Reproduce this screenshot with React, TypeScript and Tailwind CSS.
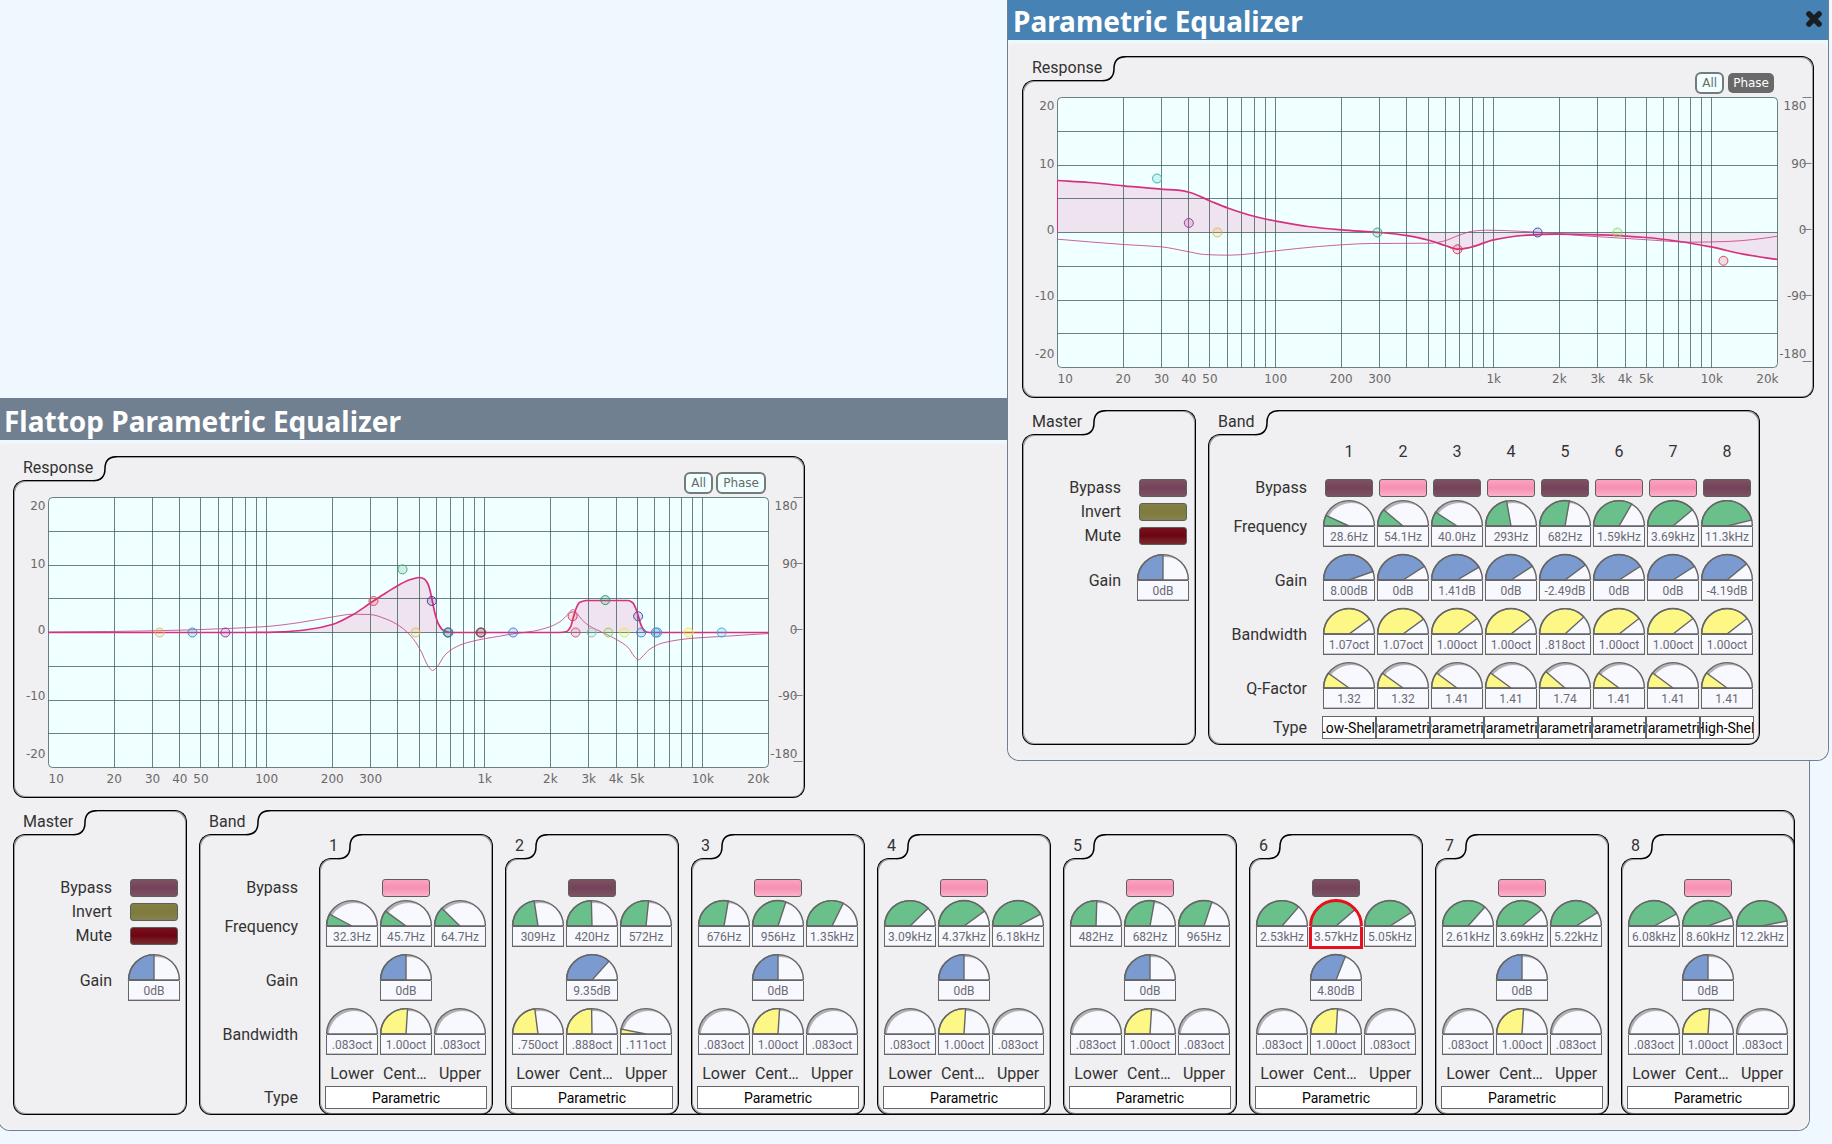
import { useState } from "react"
import type { ReactNode } from "react"

type Point = [number, number]
type Handle = { freq: number, db: number, color: string }

const PLOT_W = 720
const PLOT_H = 270
const AXIS_H = 264
const LABEL_Y = [12, 70, 136, 202, 260]
const X_TICKS: [number, string][] = [
    [20, "20"], [30, "30"], [40, "40"], [50, "50"], [100, "100"], [200, "200"], [300, "300"],
    [1000, "1k"], [2000, "2k"], [3000, "3k"], [4000, "4k"], [5000, "5k"], [10000, "10k"],
]
const GRID_FREQS = [10, 100, 1000, 10000]
    .flatMap((d) => [1, 2, 3, 4, 5, 6, 7, 8, 9].map((n) => n * d))
    .filter((f) => f > 10 && f < 20000)

const GREEN = "#69c08a"
const BLUE = "#7b9bd0"
const YELLOW = "#fdf786"

const freqPos = (hz: number) => Math.log10(hz / 10) / Math.log10(2000)
const octPos = (oct: number) => Math.log10(oct / 0.083) / 2.08
const xOf = (hz: number) => freqPos(hz) * PLOT_W
const yOf = (db: number) => PLOT_H / 2 - db * 6.75

function formatHz(hz: number) {
    if (hz >= 1000) return `${(hz / 1000).toPrecision(3)}kHz`
    return `${hz.toPrecision(3)}Hz`
}

function formatDb(db: number) {
    return db === 0 ? "0dB" : `${db.toFixed(2)}dB`
}

function formatOct(oct: number) {
    return oct < 1 ? `${oct.toFixed(3).slice(1)}oct` : `${oct.toFixed(2)}oct`
}

// Monotone cubic through the sampled points, so flat parts stay flat
function smooth(pts: Point[]) {
    const slope = pts.slice(1).map((p, i) => (p[1] - pts[i][1]) / (p[0] - pts[i][0]))
    const tan = pts.map((_, i) => {
        if (i === 0) return slope[0]
        if (i === pts.length - 1) return slope[i - 1]
        const a = slope[i - 1]
        const b = slope[i]
        return a * b <= 0 ? 0 : (2 * a * b) / (a + b)
    })
    let d = `M${pts[0][0]} ${pts[0][1]}`
    for (let i = 1; i < pts.length; i++) {
        const [x0, y0] = pts[i - 1]
        const [x1, y1] = pts[i]
        const h = (x1 - x0) / 3
        d += ` C${x0 + h} ${y0 + tan[i - 1] * h} ${x1 - h} ${y1 - tan[i] * h} ${x1} ${y1}`
    }
    return d
}

function Chart({ gain, phase, handles, title }: { gain: Point[], phase: Point[], handles: Handle[], title: string }) {
    const line = smooth(gain)
    return (
        <svg width="790" height="300" viewBox="-34.5 -0.5 790 300" className="block" role="img" aria-label={title}>
            <rect width={PLOT_W} height={PLOT_H} rx="4" fill="#f0ffff" />
            <path d={`${line} L${PLOT_W} 135 L0 135 Z`} fill="#dd2878" fillOpacity="0.13" />
            <g stroke="#2f4f4f" strokeOpacity="0.7">
                {GRID_FREQS.map((f) => (
                    <path key={f} d={`M${Math.round(xOf(f))} 0V${PLOT_H}`} />
                ))}
                {[1, 2, 3, 4, 5, 6, 7].map((i) => (
                    <path key={i} d={`M0 ${Math.round((i * PLOT_H) / 8)}H${PLOT_W}`} />
                ))}
                <rect width={PLOT_W} height={PLOT_H} rx="4" fill="none" />
            </g>
            <path d={`M0 135V${gain[0][1]}`} stroke="#d6317f" />
            <path d={line} fill="none" stroke="#d6317f" strokeWidth="1.7" />
            <path d={smooth(phase)} fill="none" stroke="#c43c84" strokeWidth="0.9" strokeOpacity="0.9" />
            {handles.map((h, i) => (
                <circle key={i} cx={xOf(h.freq)} cy={yOf(h.db)} r="4.5" stroke={h.color} fill={h.color} fillOpacity="0.18" />
            ))}
            <g fontFamily="'DejaVu Sans', sans-serif" fontSize="12" fill="#696969">
                {["20", "10", "0", "-10", "-20"].map((t, i) => (
                    <text key={t} x="-3" y={LABEL_Y[i]} textAnchor="end">{t}</text>
                ))}
                {["180", "90", "0", "-90", "-180"].map((t, i) => (
                    <text key={t} x="749" y={LABEL_Y[i]} textAnchor="end">{t}</text>
                ))}
                <text x="0" y="285">10</text>
                {X_TICKS.map(([f, t]) => (
                    <text key={f} x={xOf(f)} y="285" textAnchor="middle">{t}</text>
                ))}
                <text x="721" y="285" textAnchor="end">20k</text>
            </g>
            {[0, 1, 2, 3, 4].map((i) => (
                <path key={i} d={`M745 ${(i * AXIS_H) / 4}H754`} stroke="#808080" />
            ))}
        </svg>
    )
}

function Panel({ label, className = "", children }: { label: string, className?: string, children: ReactNode }) {
    return (
        <section className={`flex flex-col ${className}`}>
            <div className="flex h-9">
                <div className="flex flex-col">
                    <h3 className="h-6 pl-2.5 text-base leading-6 text-[#333]">{label}</h3>
                    <div className="h-3 rounded-tl-xl border-t border-l border-black shadow-[inset_1px_1px_0_#00000059]" />
                </div>
                <svg width="24" height="26" viewBox="0 0 24 26" fill="none" className="shrink-0">
                    <path d="M0 24.7C8 24.7 12 20 12 12.5C12 5 16 0.7 24 0.7" stroke="black" strokeWidth="1.5" />
                </svg>
                <div className="flex-1 rounded-tr-xl border-t border-r border-black shadow-[inset_-1px_1px_0_#00000059]" />
            </div>
            <div className="grow rounded-b-xl border-x border-b border-black shadow-[inset_1px_-1px_0_#00000059,inset_-1px_0_0_#00000059]">
                {children}
            </div>
        </section>
    )
}

function PlotToggle({ label, initial = false }: { label: string, initial?: boolean }) {
    const [on, setOn] = useState(initial)
    const look = on
        ? "border border-transparent bg-[#696969] bg-clip-padding px-[5px] text-white"
        : "border-2 border-[#737b7b] bg-[#f0ffff] px-[5px] text-[#696969]"
    return (
        <button
            type="button" aria-pressed={on} onClick={() => setOn(!on)}
            className={`flex h-[22px] items-center rounded-md font-['DejaVu_Sans',sans-serif] text-xs ${look}`}
        >
            {label}
        </button>
    )
}

function Response({ phaseOn = false, children }: { phaseOn?: boolean, children: ReactNode }) {
    return (
        <Panel label="Response" className="h-[341px] w-[792px]">
            <div className="-mt-5 flex justify-end gap-[3px] pr-[38px] pb-[3px]">
                <PlotToggle label="All" />
                <PlotToggle label="Phase" initial={phaseOn} />
            </div>
            {children}
        </Panel>
    )
}

const LED_COLORS = {
    pinkOff: "from-[#7d5262] via-[#74425a] to-[#7b5563]",
    pinkOn: "from-[#f9a4c0] via-[#f78fb3] to-[#f9b2c9]",
    olive: "from-[#828047] via-[#807b3c] to-[#83824f]",
    red: "from-[#76121c] via-[#6d0411] to-[#762a30]",
}

function Led({ color, label }: { color: keyof typeof LED_COLORS, label: string }) {
    return (
        <div className="flex h-6 w-[54px] items-center justify-center">
            <button
                type="button" aria-label={label}
                className={`h-[18px] w-12 rounded-[3px] border border-[#5e5e5e] bg-linear-to-b ${LED_COLORS[color]}`}
            />
        </div>
    )
}

function Knob({ pos, text, color, label, selected = false }: { pos: number, text: string, color: string, label: string, selected?: boolean }) {
    const a = Math.PI * Math.min(1, Math.max(0, pos))
    const px = 26 - 25.4 * Math.cos(a)
    const py = 26 - 25.4 * Math.sin(a)
    return (
        <div className="flex h-[54px] w-[54px] flex-col items-center">
            <svg width="52" height="27" viewBox="0 0 52 27" className="shrink-0 overflow-visible" aria-hidden="true">
                <clipPath id="dome"><path d="M0.6 26A25.4 25.4 0 0 1 51.4 26Z" /></clipPath>
                <g clipPath="url(#dome)">
                    <rect width="52" height="27" fill="#b2b2b6" />
                    <circle cx="28.5" cy="29" r="26" fill="#f8f8ff" />
                </g>
                {pos > 0 && (
                    <path d={`M26 26L0.6 26A25.4 25.4 0 0 1 ${px} ${py}Z`} fill={color} stroke="#666" strokeWidth="1.4" />
                )}
                <path d="M0.6 26A25.4 25.4 0 0 1 51.4 26" fill="none" stroke={selected ? "#e8101a" : "#666"} strokeWidth={selected ? 3 : 1.4} />
                <path d="M0.6 26.2H51.4" stroke="#666" strokeWidth="1.8" />
            </svg>
            <input
                readOnly value={text} aria-label={label}
                className={`shrink-0 bg-[#f8f8ff] text-center text-xs text-[#6a6a72] outline-none ${selected ? "h-[22px] w-[54px] border-3 border-t-0 border-[#e8101a]" : "h-5 w-[52px] border border-t-0 border-[#666] shadow-[inset_0_-1px_0_#66666659]"}`}
            />
        </div>
    )
}

function TypeSelect({ value, label, narrow = false }: { value: string, label: string, narrow?: boolean }) {
    return (
        <div className={`flex h-6 items-start justify-center ${narrow ? "w-[54px]" : "w-full"}`}>
            <div className="flex h-[23px] w-full justify-center overflow-hidden border border-[#666] bg-white">
                <select
                    defaultValue={value} aria-label={label}
                    className={`shrink-0 appearance-none text-center text-sm text-black ${narrow ? "w-20" : "w-full"}`}
                >
                    {["Parametric", "Low-Shelf", "High-Shelf"].map((t) => <option key={t}>{t}</option>)}
                </select>
            </div>
        </div>
    )
}

function RowLabel({ className = "h-6", children }: { className?: string, children: ReactNode }) {
    return <div className={`flex items-center justify-end ${className}`}>{children}</div>
}

function Master() {
    return (
        <Panel label="Master" className="w-[174px]">
            <div className="flex justify-end gap-[15px] pt-[30px] pr-[5px] text-base text-[#333]">
                <div>
                    <RowLabel>Bypass</RowLabel>
                    <RowLabel>Invert</RowLabel>
                    <RowLabel>Mute</RowLabel>
                    <RowLabel className="mt-1.5 h-[54px]">Gain</RowLabel>
                </div>
                <div>
                    <Led color="pinkOff" label="Master bypass" />
                    <Led color="olive" label="Master invert" />
                    <Led color="red" label="Master mute" />
                    <div className="mt-1.5">
                        <Knob pos={0.5} text="0dB" color={BLUE} label="Master gain" />
                    </div>
                </div>
            </div>
        </Panel>
    )
}

function EqWindow({ title, bar, place, closable = false, children }: { title: string, bar: string, place: string, closable?: boolean, children: ReactNode }) {
    return (
        <article className={`absolute overflow-hidden rounded-b-xl border-x border-b border-[#708090] bg-[#f0f8ff] ${place}`}>
            <header className={`flex h-[42px] items-center justify-between pt-1 pr-[5px] pl-[5px] ${bar}`}>
                <h2 className="font-['Noto_Sans',sans-serif] text-[28px] leading-[38px] font-bold text-white">{title}</h2>
                {closable && (
                    <button type="button" aria-label="Close" className="pb-1">
                        <svg width="18" height="18" viewBox="0 0 18 18">
                            <path d="M4 4L14 14M14 4L4 14" stroke="#1a1d21" strokeWidth="5.6" strokeLinecap="round" />
                        </svg>
                    </button>
                )}
            </header>
            <div className="mt-[3px] flex flex-col gap-[13px] rounded-b-xl bg-[#f0eff1] px-[14px] pt-[13px] pb-[15px] shadow-[inset_0_0_4px_#f0f8ff]">
                {children}
            </div>
        </article>
    )
}

const flatBands = [
    { bypass: true, freq: [32.3, 45.7, 64.7], gain: 0, bw: [0.083, 1, 0.083] },
    { bypass: false, freq: [309, 420, 572], gain: 9.35, bw: [0.75, 0.888, 0.111] },
    { bypass: true, freq: [676, 956, 1350], gain: 0, bw: [0.083, 1, 0.083] },
    { bypass: true, freq: [3090, 4370, 6180], gain: 0, bw: [0.083, 1, 0.083] },
    { bypass: true, freq: [482, 682, 965], gain: 0, bw: [0.083, 1, 0.083] },
    { bypass: false, freq: [2530, 3570, 5050], gain: 4.8, bw: [0.083, 1, 0.083], selected: 1 },
    { bypass: true, freq: [2610, 3690, 5220], gain: 0, bw: [0.083, 1, 0.083] },
    { bypass: true, freq: [6080, 8600, 12200], gain: 0, bw: [0.083, 1, 0.083] },
]

const bands = [
    { bypass: false, freq: 28.6, gain: 8, bw: 1.07, bwPos: 0.8, q: 1.32, qPos: 0.197, type: "Low-Shelf" },
    { bypass: true, freq: 54.1, gain: 0, bw: 1.07, bwPos: 0.8, q: 1.32, qPos: 0.197, type: "Parametric" },
    { bypass: false, freq: 40, gain: 1.41, bw: 1, bwPos: 0.79, q: 1.41, qPos: 0.203, type: "Parametric" },
    { bypass: true, freq: 293, gain: 0, bw: 1, bwPos: 0.79, q: 1.41, qPos: 0.203, type: "Parametric" },
    { bypass: false, freq: 682, gain: -2.49, bw: 0.818, bwPos: 0.765, q: 1.74, qPos: 0.225, type: "Parametric" },
    { bypass: true, freq: 1590, gain: 0, bw: 1, bwPos: 0.79, q: 1.41, qPos: 0.203, type: "Parametric" },
    { bypass: true, freq: 3690, gain: 0, bw: 1, bwPos: 0.79, q: 1.41, qPos: 0.203, type: "Parametric" },
    { bypass: false, freq: 11300, gain: -4.19, bw: 1, bwPos: 0.79, q: 1.41, qPos: 0.203, type: "High-Shelf" },
]

const flatGain: Point[] = [
    [0, 135], [200, 135], [234.7, 134.3], [259.7, 132], [284.7, 126.7], [304.7, 117], [321.3, 106], [338, 95],
    [351.3, 87], [361.3, 82.3], [370.7, 80], [375.3, 81.3], [379.7, 87], [383.7, 102.7], [386.3, 115.3],
    [389.7, 126], [394.7, 132.7], [403, 135], [511.3, 135], [518, 134], [522, 129.3], [525.3, 118.3],
    [528, 110], [531.3, 104.7], [538, 103], [579.6, 103], [584, 105], [587.3, 111], [590, 119.3],
    [592.6, 127.7], [596.3, 133.7], [601.3, 135], [720, 135],
]

const flatPhase: Point[] = [
    [0, 134.5], [60, 134], [130, 132.7], [171.3, 131.3], [218, 129], [251.3, 125], [284.7, 119.3], [304.7, 116.7],
    [321.3, 117], [338, 121.7], [351.3, 128.7], [363, 139.3], [372, 152.7], [379.7, 168.7], [384, 173],
    [388.7, 169.3], [396.3, 157.7], [404.7, 151], [418, 145.3], [437, 141], [451.3, 138.7], [464.7, 136.3],
    [484.7, 133.7], [501.3, 129.3], [511.3, 124.3], [518, 118.3], [521.3, 114], [524.6, 112], [528.6, 116],
    [533, 121.7], [541.3, 128.7], [554.6, 135.3], [568, 142], [579.6, 150], [585.6, 158.7], [590, 162.3],
    [594.6, 158.3], [601.3, 151.7], [614.6, 145.3], [644.6, 140.7], [678, 138.7], [720, 136],
]

const eqGain: Point[] = [
    [0, 83], [32, 85], [65.8, 88.3], [103.5, 91.7], [120.4, 92.7], [132.6, 95], [153.3, 103.7], [170.9, 110.7],
    [197.4, 119], [218.6, 123.7], [250.4, 129], [283.9, 132.3], [323.1, 135], [351.3, 138.3], [371.4, 142.7],
    [388.4, 148.3], [400.6, 151.7], [412.3, 150], [436.2, 142.3], [465.4, 138], [499.8, 136.7], [542.3, 137.3],
    [588.4, 140], [621.9, 144], [654.8, 149.7], [685.5, 156.7], [720, 162],
]

const eqPhase: Point[] = [
    [0, 141.7], [65.8, 147], [103.5, 149.3], [128.4, 153.7], [147, 157], [170.9, 157.7], [218.6, 153.3],
    [261, 149], [314.1, 146], [372.5, 145.7], [385.8, 143.7], [401.7, 137.7], [414.9, 133.7], [428.2, 132.7],
    [473.3, 134.3], [526.4, 138.3], [590, 142.3], [632.5, 144.7], [669.6, 144], [696.1, 142], [720, 138.7],
]

const flatHandles: Handle[] = [
    { freq: 32.3, db: 0, color: "#e6b95c" }, { freq: 45.7, db: 0, color: "#3a92b8" }, { freq: 64.7, db: 0, color: "#a03a9a" },
    { freq: 309, db: 4.67, color: "#e0485a" }, { freq: 420, db: 9.35, color: "#3cb371" }, { freq: 572, db: 4.67, color: "#5b3a96" },
    { freq: 482, db: 0, color: "#e6b95c" }, { freq: 676, db: 0, color: "#2e8b9a" }, { freq: 682, db: 0, color: "#4a6a80" },
    { freq: 956, db: 0, color: "#7a3a55" }, { freq: 965, db: 0, color: "#8a4a50" }, { freq: 1350, db: 0, color: "#4a80d0" },
    { freq: 2530, db: 2.4, color: "#e0405a" }, { freq: 2610, db: 0, color: "#e05080" }, { freq: 3090, db: 0, color: "#8fc0a8" },
    { freq: 3570, db: 4.8, color: "#2e9b6a" }, { freq: 3690, db: 0, color: "#9ac860" }, { freq: 4370, db: 0, color: "#e8e850" },
    { freq: 5050, db: 2.4, color: "#5a4aa0" }, { freq: 5220, db: 0, color: "#4a80d8" }, { freq: 6080, db: 0, color: "#4a90c8" },
    { freq: 6180, db: 0, color: "#3aa0d8" }, { freq: 8600, db: 0, color: "#f0f020" }, { freq: 12200, db: 0, color: "#3ab0e0" },
]

const eqHandles: Handle[] = [
    { freq: 28.6, db: 8, color: "#35b8b0" }, { freq: 40, db: 1.41, color: "#a8409a" }, { freq: 54.1, db: 0, color: "#e6b95c" },
    { freq: 293, db: 0, color: "#2ea878" }, { freq: 682, db: -2.49, color: "#e03858" }, { freq: 1590, db: 0, color: "#4a4aa8" },
    { freq: 3690, db: 0, color: "#98d860" }, { freq: 11300, db: -4.19, color: "#e04868" },
]

function FlattopWindow() {
    return (
        <EqWindow title="Flattop Parametric Equalizer" bar="bg-[#708090]" place="top-[398px] left-[-2px]">
            <Response>
                <Chart gain={flatGain} phase={flatPhase} handles={flatHandles} title="Flattop response" />
            </Response>
            <div className="flex gap-3">
                <Master />
                <Panel label="Band">
                    <div className="-mt-3 flex text-base text-[#333]">
                        <div className="w-[119px] pt-[42px] pr-[21px]">
                            <RowLabel>Bypass</RowLabel>
                            <RowLabel className="h-[54px]">Frequency</RowLabel>
                            <RowLabel className="h-[54px]">Gain</RowLabel>
                            <RowLabel className="h-[54px]">Bandwidth</RowLabel>
                            <RowLabel className="mt-6 h-6">Type</RowLabel>
                        </div>
                        <div className="-mr-px -mb-px flex gap-3">
                            {flatBands.map((b, i) => (
                                <Panel key={i} label={`${i + 1}`} className="w-[174px]">
                                    <div className="flex flex-col items-center px-[5px] pt-1.5 pb-1">
                                        <Led color={b.bypass ? "pinkOn" : "pinkOff"} label={`Band ${i + 1} bypass`} />
                                        <div className="flex">
                                            {b.freq.map((f, j) => (
                                                <Knob key={j} pos={freqPos(f)} text={formatHz(f)} color={GREEN} label={`Band ${i + 1} frequency`} selected={b.selected === j} />
                                            ))}
                                        </div>
                                        <Knob pos={0.5 + b.gain / 40} text={formatDb(b.gain)} color={BLUE} label={`Band ${i + 1} gain`} />
                                        <div className="flex">
                                            {b.bw.map((w, j) => (
                                                <Knob key={j} pos={octPos(w)} text={formatOct(w)} color={YELLOW} label={`Band ${i + 1} bandwidth`} />
                                            ))}
                                        </div>
                                        <div className="flex h-6 text-center leading-6">
                                            {["Lower", "Center", "Upper"].map((t) => (
                                                <div key={t} className="w-[54px] truncate px-1">{t}</div>
                                            ))}
                                        </div>
                                        <TypeSelect value="Parametric" label={`Band ${i + 1} type`} />
                                    </div>
                                </Panel>
                            ))}
                        </div>
                    </div>
                </Panel>
            </div>
        </EqWindow>
    )
}

function ParametricWindow() {
    return (
        <EqWindow title="Parametric Equalizer" bar="bg-[#4682b4]" place="top-[-2px] left-[1007px]" closable>
            <Response phaseOn>
                <Chart gain={eqGain} phase={eqPhase} handles={eqHandles} title="Parametric response" />
            </Response>
            <div className="flex gap-3">
                <Master />
                <Panel label="Band">
                    <div className="-mt-3 flex gap-[15px] pr-[5px] pb-1 text-base text-[#333]">
                        <div className="w-[98px] pt-[42px]">
                            <RowLabel>Bypass</RowLabel>
                            <RowLabel className="h-[54px]">Frequency</RowLabel>
                            <RowLabel className="h-[54px]">Gain</RowLabel>
                            <RowLabel className="h-[54px]">Bandwidth</RowLabel>
                            <RowLabel className="h-[54px]">Q-Factor</RowLabel>
                            <RowLabel>Type</RowLabel>
                        </div>
                        {/* one 54px column per band, same rows as the labels */}
                        <div className="flex">
                            {bands.map((b, i) => (
                                <div key={i} className="w-[54px]">
                                    <div className="mb-1.5 h-9 text-center leading-9">{i + 1}</div>
                                    <Led color={b.bypass ? "pinkOn" : "pinkOff"} label={`Band ${i + 1} bypass`} />
                                    <Knob pos={freqPos(b.freq)} text={formatHz(b.freq)} color={GREEN} label={`Band ${i + 1} frequency`} />
                                    <Knob pos={(b.gain + 90) / 110} text={formatDb(b.gain)} color={BLUE} label={`Band ${i + 1} gain`} />
                                    <Knob pos={b.bwPos} text={formatOct(b.bw)} color={YELLOW} label={`Band ${i + 1} bandwidth`} />
                                    <Knob pos={b.qPos} text={b.q.toFixed(2)} color={YELLOW} label={`Band ${i + 1} Q-factor`} />
                                    <TypeSelect narrow value={b.type} label={`Band ${i + 1} type`} />
                                </div>
                            ))}
                        </div>
                    </div>
                </Panel>
            </div>
        </EqWindow>
    )
}

export default function App() {
    return (
        <main className="relative min-h-screen overflow-hidden bg-[#f0f8ff] font-['Roboto',sans-serif]">
            <FlattopWindow />
            <ParametricWindow />
        </main>
    )
}
